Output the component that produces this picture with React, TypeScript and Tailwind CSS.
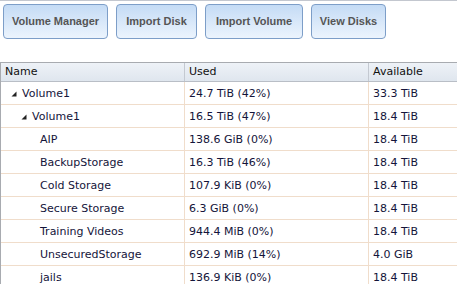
import React from "react";

const rows: { name: string; used: string; avail: string; level: number; expander?: boolean }[] = [
  { name: "Volume1", used: "24.7 TiB (42%)", avail: "33.3 TiB", level: 0, expander: true },
  { name: "Volume1", used: "16.5 TiB (47%)", avail: "18.4 TiB", level: 1, expander: true },
  { name: "AIP", used: "138.6 GiB (0%)", avail: "18.4 TiB", level: 2 },
  { name: "BackupStorage", used: "16.3 TiB (46%)", avail: "18.4 TiB", level: 2 },
  { name: "Cold Storage", used: "107.9 KiB (0%)", avail: "18.4 TiB", level: 2 },
  { name: "Secure Storage", used: "6.3 GiB (0%)", avail: "18.4 TiB", level: 2 },
  { name: "Training Videos", used: "944.4 MiB (0%)", avail: "18.4 TiB", level: 2 },
  { name: "UnsecuredStorage", used: "692.9 MiB (14%)", avail: "4.0 GiB", level: 2 },
  { name: "jails", used: "136.9 KiB (0%)", avail: "18.4 TiB", level: 2 },
];

const buttons = [
  { label: "Volume Manager", w: "w-[105px]" },
  { label: "Import Disk", w: "w-[81px]" },
  { label: "Import Volume", w: "w-[98px]" },
  { label: "View Disks", w: "w-[75px]" },
];

function Tri() {
  return (
    <svg width="6" height="6" viewBox="0 0 6 6" className="shrink-0">
      <polygon points="5.5,0.5 5.5,5.5 0.5,5.5" fill="#222" />
    </svg>
  );
}

export default function App() {
  const indent = ["pl-[10px]", "pl-[20px]", "pl-[39px]"];
  return (
    <div className="w-[457px] h-[284px] overflow-hidden bg-white border-t border-[#c3c7cf] font-['DejaVu_Sans',sans-serif]">
      <div className="flex gap-[8px] pl-[3px] pt-[3px]">
        {buttons.map((b) => (
          <div
            key={b.label}
            className={`${b.w} h-[35px] flex items-center justify-center rounded-[4px] border border-[#7d9ec8] bg-gradient-to-b from-[#c4dbf5] to-[#ecf4fd] text-[11px] font-bold text-[#555] font-['Liberation_Sans',Arial,sans-serif]`}
          >
            {b.label}
          </div>
        ))}
      </div>
      <div className="mt-[23px] border-l border-t border-[#a8abb0]">
        <div className="grid grid-cols-[184px_184px_1fr] h-[19px] bg-gradient-to-b from-[#eef2f7] to-[#dfe6ee] border-b border-[#b9bec6] text-[11px] text-[#111] leading-[18px]">
          <div className="pl-[4px] border-r border-[#c4c9d1]">Name</div>
          <div className="pl-[4px] border-r border-[#c4c9d1]">Used</div>
          <div className="pl-[4px]">Available</div>
        </div>
        {rows.map((r, i) => (
          <div
            key={i}
            className="grid grid-cols-[184px_184px_1fr] h-[23px] border-b border-[#f0ddcb] text-[11px] text-[#14143a] leading-[23px]"
          >
            <div className={`${indent[r.level]} border-r border-[#f0ddcb] flex items-center gap-[5px]`}>
              {r.expander ? <Tri /> : null}
              <span>{r.name}</span>
            </div>
            <div className="pl-[4px] border-r border-[#f0ddcb]">{r.used}</div>
            <div className="pl-[4px]">{r.avail}</div>
          </div>
        ))}
      </div>
    </div>
  );
}
